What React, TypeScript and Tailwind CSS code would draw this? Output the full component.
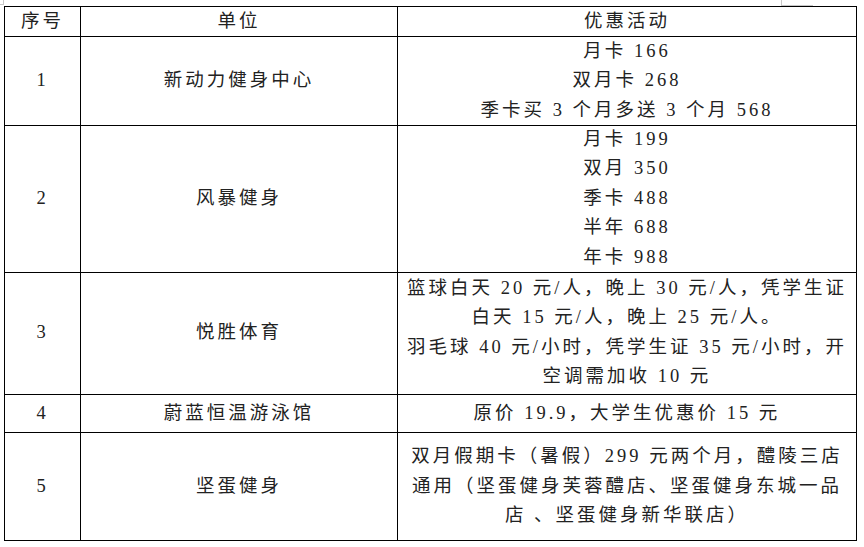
type Row = {
  no: string;
  name: string;
  height: string;
  lines: string[];
};

const rows: Row[] = [
  {
    no: "1",
    name: "新动力健身中心",
    height: "h-[88px]",
    lines: ["月卡 166", "双月卡 268", "季卡买 3 个月多送 3 个月 568"],
  },
  {
    no: "2",
    name: "风暴健身",
    height: "h-[146px]",
    lines: ["月卡 199", "双月 350", "季卡 488", "半年 688", "年卡 988"],
  },
  {
    no: "3",
    name: "悦胜体育",
    height: "h-[124px]",
    lines: [
      "篮球白天 20 元/人，晚上 30 元/人，凭学生证",
      "白天 15 元/人，晚上 25 元/人。",
      "羽毛球 40 元/小时，凭学生证 35 元/小时，开",
      "空调需加收 10 元",
    ],
  },
  {
    no: "4",
    name: "蔚蓝恒温游泳馆",
    height: "h-[38px]",
    lines: ["原价 19.9，大学生优惠价 15 元"],
  },
  {
    no: "5",
    name: "坚蛋健身",
    height: "h-[108px]",
    lines: [
      "双月假期卡（暑假）299 元两个月，醴陵三店",
      "通用（坚蛋健身芙蓉醴店、坚蛋健身东城一品",
      "店 、坚蛋健身新华联店）",
    ],
  },
];

const cell =
  "flex flex-col items-center justify-center border-r border-b border-black text-center";

function TableRow({ row }: { row: Row }) {
  return (
    <div className={`grid grid-cols-[76px_317px_459px] ${row.height}`}>
      <div className={cell}>{row.no}</div>
      <div className={cell}>{row.name}</div>
      <div className={`${cell} leading-[29.4px]`}>
        {row.lines.map((line) => (
          <div key={line} className="whitespace-pre">
            {line}
          </div>
        ))}
      </div>
    </div>
  );
}

export default function App() {
  return (
    <div className="relative h-[547px] w-[864px] bg-white">
      {/* page corner marks */}
      <div className="absolute left-0 top-0 h-[5px] w-[4px] border-r border-b border-[#c8c8c8]" />
      <div className="absolute left-[781px] top-0 h-[6px] w-[32px] border-l border-b border-[#c8c8c8]" />

      <div className="ml-[4px] w-[853px] pt-[6px] font-['Liberation_Serif','Noto_Sans_CJK_SC',serif] text-[18.5px] font-normal tracking-[3px] text-[#222]">
        <div className="border-l border-t border-black">
          <div className="grid h-[30px] grid-cols-[76px_317px_459px]">
            <div className={cell}>序号</div>
            <div className={cell}>单位</div>
            <div className={cell}>优惠活动</div>
          </div>
          {rows.map((row) => (
            <TableRow key={row.no} row={row} />
          ))}
        </div>
      </div>
    </div>
  );
}
